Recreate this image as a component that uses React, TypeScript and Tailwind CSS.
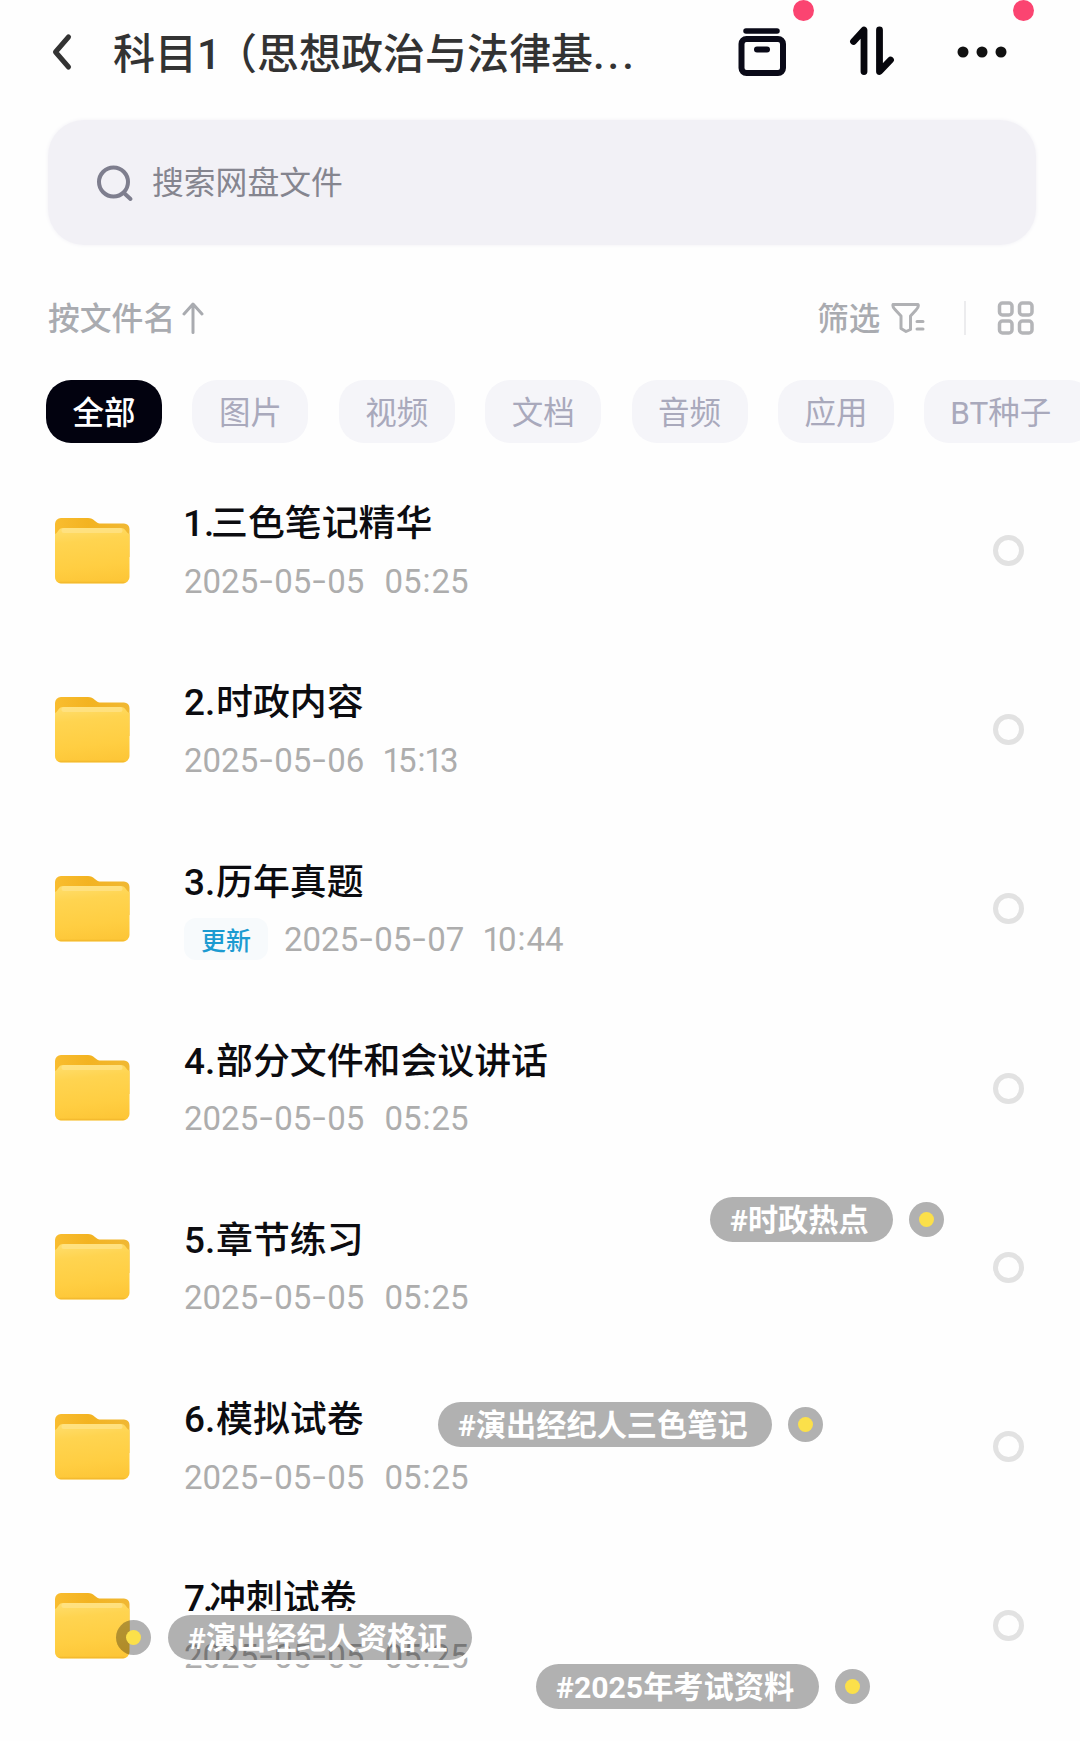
import React from "react";

type Row = {
  prefix: string;
  prefixClass: string;
  name: string;
  date: string;
  time: string;
  updated?: boolean;
};

const rows: Row[] = [
  { prefix: "1.", prefixClass: "w-[28px] -ml-px", name: "三色笔记精华", date: "2025-05-05", time: "05:25" },
  { prefix: "2.", prefixClass: "w-[32px]", name: "时政内容", date: "2025-05-06", time: "15:13" },
  { prefix: "3.", prefixClass: "w-[32px]", name: "历年真题", date: "2025-05-07", time: "10:44", updated: true },
  { prefix: "4.", prefixClass: "w-[32px]", name: "部分文件和会议讲话", date: "2025-05-05", time: "05:25" },
  { prefix: "5.", prefixClass: "w-[32px]", name: "章节练习", date: "2025-05-05", time: "05:25" },
  { prefix: "6.", prefixClass: "w-[32px]", name: "模拟试卷", date: "2025-05-05", time: "05:25" },
  { prefix: "7.", prefixClass: "w-[25px] tracking-[-2px]", name: "冲刺试卷", date: "2025-05-05", time: "05:25" },
];

const chips = ["全部", "图片", "视频", "文档", "音频", "应用"];

function Digits({ text }: { text: string }) {
  return (
    <>
      {text.split("").map((c, i) => (
        <span
          key={i}
          className={
            c === "-"
              ? "inline-block w-[16px] -translate-y-px scale-x-[1.45] text-center"
              : c === "1"
                ? "-ml-[2px] -mr-[3px]"
                : c === ":"
                  ? "inline-block w-[10px] -translate-y-px text-center"
                  : ""
          }
        >
          {c}
        </span>
      ))}
    </>
  );
}

function Folder() {
  return (
    <svg className="block h-[68px] w-[76px] shrink-0" viewBox="0 0 76 68" fill="none">
      <defs>
        <linearGradient id="folderFront" x1="26" y1="10" x2="32" y2="67" gradientUnits="userSpaceOnUse">
          <stop stopColor="#ffdd6b" />
          <stop offset="0.25" stopColor="#ffd450" />
          <stop offset="0.7" stopColor="#ffce42" />
          <stop offset="1" stopColor="#fdc637" />
        </linearGradient>
        <linearGradient id="folderBack" x1="0" y1="0" x2="76" y2="0" gradientUnits="userSpaceOnUse">
          <stop stopColor="#f9bd30" />
          <stop offset="0.45" stopColor="#f3b321" />
          <stop offset="1" stopColor="#f0b834" />
        </linearGradient>
      </defs>
      <path d="M1 7a6 6 0 0 1 6-6h27c3 0 5 1 7 3l2 1.500c1 .8 2 1 3.500 1H70a5.500 5.500 0 0 1 5.500 5.500V40H1Z" fill="url(#folderBack)" />
      <path d="M1 17c3-1 3-6 8-6h58c5 0 5 5 8.500 6v43a6.500 6.500 0 0 1-6.500 6.500H7A6 6 0 0 1 1 60Z" fill="url(#folderFront)" />
      <path d="M10 13.500h56" stroke="#ffe48c" strokeWidth="5" strokeLinecap="round" opacity="0.7" />
      <path d="M6 65.500h64" stroke="#f0b52c" strokeWidth="1.500" strokeLinecap="round" opacity="0.7" />
    </svg>
  );
}

function Dot() {
  return (
    <span className="flex size-[35px] shrink-0 items-center justify-center rounded-full bg-black/30">
      <span className="size-[15px] rounded-full bg-[#fbe04a]" />
    </span>
  );
}

function Pill({ text, width }: { text: string; width: string }) {
  return (
    <span
      className={`flex h-[45px] shrink-0 items-center rounded-full bg-black/30 pt-[3px] pl-[20px] text-[30.200px] font-bold leading-none whitespace-nowrap text-white ring-4 ring-[#fefefe] ${width}`}
    >
      {text}
    </span>
  );
}

export default function App() {
  return (
    <div
      lang="zh-CN"
      className="relative h-[1741px] w-[1080px] overflow-hidden bg-[#fefefe] font-['Roboto','Noto_Sans_CJK_SC',sans-serif]"
    >
      <header className="flex h-[104px] items-center pl-[51px]">
        <svg className="h-[38px] w-[22px]" viewBox="0 0 22 38" fill="none">
          <path d="M17.500 4 4.500 19l13 15" stroke="#333" strokeWidth="5" strokeLinecap="round" strokeLinejoin="round" />
        </svg>
        <h1 className="ml-[40px] flex w-[523px] items-center pt-[5px] text-[42px] leading-none font-medium whitespace-nowrap text-[#333]">
          <span>科目1</span>
          <span className="-ml-[6px]">（思想政治与法律基</span>
          <span className="tracking-[3px]">...</span>
        </h1>
        <div className="relative ml-[102px]">
          <svg className="block h-[50px] w-[48px]" viewBox="0 0 48 50" fill="none" stroke="#0a0a18" strokeLinecap="round">
            <path d="M8 4h31" strokeWidth="5.500" />
            <rect x="3.500" y="12" width="41.500" height="34" rx="5" strokeWidth="6" />
            <path d="M19 22.500h10" strokeWidth="6" />
          </svg>
          <span className="absolute -top-[27px] left-[55px] size-[21px] rounded-full bg-[#fb4471]" />
        </div>
        <svg className="ml-[63px] h-[52px] w-[48px]" viewBox="0 0 48 52" fill="none" stroke="#06060c" strokeWidth="6.800" strokeLinecap="round" strokeLinejoin="round">
          <path d="M4.500 15.500 15 4v41.500" />
          <path d="M30.500 4V45.500L41.500 34" />
        </svg>
        <div className="relative ml-[60px]">
          <svg className="block h-[12px] w-[50px]" viewBox="0 0 50 12" fill="#111">
            <circle cx="6" cy="6" r="5.500" />
            <circle cx="25" cy="6" r="5.500" />
            <circle cx="44" cy="6" r="5.500" />
          </svg>
          <span className="absolute -top-[46px] left-[56px] size-[21px] rounded-full bg-[#fb4471]" />
        </div>
      </header>

      <div className="mt-[16px] ml-[48px] flex h-[125px] w-[988px] items-center rounded-[36px] bg-[#f2f1f6] pl-[48px] shadow-[0_0_4px_#f2f1f6]">
        <svg className="h-[38px] w-[38px]" viewBox="0 0 38 38" fill="none" stroke="#7e7e8e" strokeWidth="4" strokeLinecap="round">
          <circle cx="17.500" cy="18" r="14.500" />
          <path d="m28 29 6.500 6" />
        </svg>
        <span className="ml-[18px] pt-[3px] text-[31.800px] leading-none text-[#85858f]">搜索网盘文件</span>
      </div>

      <div className="mt-[49px] flex h-[48px] items-center pl-[48px] text-[#a9abb0]">
        <span className="pt-[4px] text-[31.800px] leading-none font-medium">按文件名</span>
        <svg className="ml-[7px] h-[32px] w-[22px]" viewBox="0 0 22 32" fill="none" stroke="currentColor" strokeWidth="3" strokeLinecap="round" strokeLinejoin="round">
          <path d="M11 30.500V2.500M2 12l9-10 9 10" />
        </svg>
        <span className="ml-[613px] pt-[4px] text-[31.500px] leading-none font-medium">筛选</span>
        <svg className="ml-[11px] h-[32px] w-[34px]" viewBox="0 0 34 32" fill="none" stroke="#b0b1b4" strokeWidth="3" strokeLinecap="round" strokeLinejoin="round">
          <path d="M2 2.500h25c1 2-.5 4-2 5.500l-5.500 6V27.500l-4.500 2-5-3V14L4 7.500C2.500 6 1.500 4.500 2 2.500Z" />
          <path d="M26 19.500h6M26 27h6" />
        </svg>
        <span className="ml-[39px] h-[34px] w-[2px] bg-[#ececee]" />
        <svg className="ml-[31px] h-[36px] w-[38px]" viewBox="0 0 38 36" fill="none" stroke="#b4b5b8" strokeWidth="3.500">
          <rect x="2.500" y="3" width="12.500" height="12" rx="3" />
          <rect x="22.500" y="3" width="12.500" height="12" rx="3" />
          <rect x="2.500" y="21" width="12.500" height="12" rx="3" />
          <rect x="22.500" y="21" width="12.500" height="12" rx="3" />
        </svg>
      </div>

      <nav className="mt-[38px] ml-[46px] flex h-[63px] gap-[30.400px] overflow-hidden text-[31.500px] leading-none">
        {chips.map((label, i) => (
          <span
            key={label}
            className={
              i === 0
                ? "flex w-[116px] shrink-0 items-center justify-center rounded-[25px] bg-[#02020f] pt-[4px] font-medium text-white"
                : "flex w-[116px] shrink-0 items-center justify-center rounded-[25px] bg-[#f5f5f9] pt-[4px] text-[#a9a9bc]"
            }
          >
            {label}
          </span>
        ))}
        <span className="flex w-[170px] shrink-0 items-center rounded-[25px] bg-[#f5f5f9] pt-[4px] pl-[26px] text-[#a9a9bc]">
          BT种子
        </span>
      </nav>

      <main className="mt-[18px] flex flex-col">
        {rows.map((row) => (
          <div key={row.prefix} className="flex h-[179.200px] items-center pl-[54px]">
            <Folder />
            <div className="ml-[54px] flex h-[105px] w-[700px] flex-col justify-between">
              <div className="flex h-[48px] items-center pt-[5px] text-[36.900px] leading-none font-medium whitespace-nowrap text-[#0c0c10]">
                <span className={`inline-block shrink-0 ${row.prefixClass}`}>{row.prefix}</span>
                <span>{row.name}</span>
              </div>
              <div className="flex h-[44px] items-center text-[33px] leading-none whitespace-nowrap text-[#adadad]">
                {row.updated && (
                  <span className="mr-[16px] flex h-[42px] w-[84px] items-center justify-center rounded-[12px] bg-[#f7fafc] pt-[5px] text-[25px] font-medium text-[#1c9bd1]">
                    更新
                  </span>
                )}
                <span>
                  <Digits text={row.date} />
                </span>
                <span className="ml-[20px]">
                  <Digits text={row.time} />
                </span>
              </div>
            </div>
            <span className="ml-[109px] size-[31px] rounded-full border-[5px] border-[#e2e2e2]" />
          </div>
        ))}
      </main>

      <div className="absolute top-[1197px] left-[710px] flex items-center gap-[16px]">
        <Pill text="#时政热点" width="w-[183px]" />
        <Dot />
      </div>
      <div className="absolute top-[1402px] left-[438px] flex items-center gap-[16px]">
        <Pill text="#演出经纪人三色笔记" width="w-[334px]" />
        <Dot />
      </div>
      <div className="absolute top-[1615px] left-[116px] flex items-center gap-[17px]">
        <Dot />
        <Pill text="#演出经纪人资格证" width="w-[304px]" />
      </div>
      <div className="absolute top-[1664px] left-[536px] flex items-center gap-[16px]">
        <Pill text="#2025年考试资料" width="w-[283px]" />
        <Dot />
      </div>
    </div>
  );
}
